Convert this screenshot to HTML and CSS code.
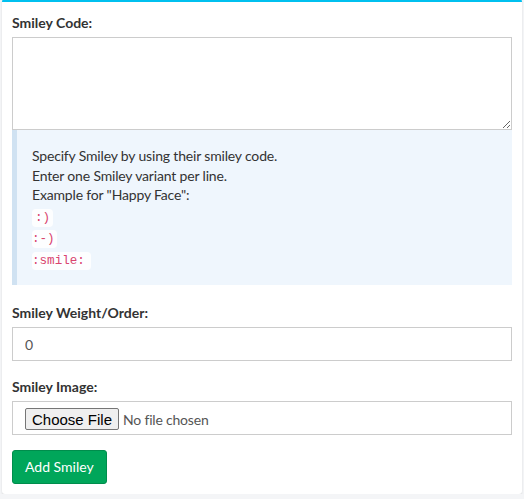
FILE: index.html
```html
<!DOCTYPE html>
<html>
<head>
<meta charset="utf-8">
<link rel="stylesheet" href="styles.css">
</head>
<body>
<div class="box">
  <div class="box-body">
    <div class="form-group">
      <label class="label">Smiley Code:</label>
      <textarea class="form-control textarea"></textarea>
      <div class="callout">
        <div class="line">Specify Smiley by using their smiley code.</div>
        <div class="line">Enter one Smiley variant per line.</div>
        <div class="line">Example for "Happy Face":</div>
        <div class="code-line"><code class="c1">:)</code></div>
        <div class="code-line"><code class="c2">:-)</code></div>
        <div class="code-line"><code class="c3">:smile:</code></div>
      </div>
    </div>
    <div class="form-group">
      <label class="label">Smiley Weight/Order:</label>
      <input class="form-control input" type="text" value="0">
    </div>
    <div class="form-group form-group-last">
      <label class="label">Smiley Image:</label>
      <div class="form-control file-wrap">
        <input class="file" type="file">
      </div>
    </div>
    <button class="btn">Add Smiley</button>
  </div>
</div>
</body>
</html>
```
FILE: styles.css
```css
html, body {
  margin: 0;
  padding: 0;
}
body {
  background: #f4f5f7;
  font-family: Lato, "Liberation Sans", sans-serif;
  font-size: 14px;
  line-height: 20px;
  color: #333;
  padding: 0 2px;
}
.box {
  margin-top: -1px;
  background: #fff;
  border-top: 3px solid #00c0ef;
  border-radius: 3px;
  box-shadow: 0 1px 2px rgba(0,0,0,0.12);
}
.box-body {
  padding: 11px 10px 10px;
}
.label {
  display: block;
  font-weight: 700;
  margin-bottom: 4px;
  color: #333;
}
.form-group {
  margin-bottom: 16px;
}
.form-group-last {
  margin-bottom: 15px;
}
.form-control {
  display: block;
  box-sizing: border-box;
  width: 100%;
  border: 1px solid #ccc;
  background: #fff;
  font-family: inherit;
  font-size: 14px;
  color: #555;
  padding: 6px 12px;
  margin: 0;
}
.textarea {
  height: 93px;
  resize: vertical;
}
.callout {
  background: #eff6fd;
  border-left: 5px solid #d0e2f2;
  padding: 16px 15px 16px 15px;
  margin-bottom: 18px;
  letter-spacing: -0.17px;
}
.line {
  line-height: 19.5px;
}
.code-line {
  height: 21.5px;
  line-height: 21px;
}
code {
  font-family: "Liberation Mono", monospace;
  font-size: 12.6px;
  letter-spacing: 0;
  color: #d9446f;
  background: #fdfeff;
  border-radius: 4px;
  padding: 2px 3px;
}
.c2 {
  padding: 2px 2px 2px 0;
}
.c3 {
  padding: 2px 6px 2px 0;
}
.input {
  height: 34px;
  outline: none;
}
.file-wrap {
  height: 34px;
  padding: 6px 12px;
}
.file {
  font-family: inherit;
  font-size: 14px;
  letter-spacing: -0.2px;
  color: #555;
  line-height: 20px;
}
.file::file-selector-button {
  font-family: "Liberation Sans", Arial, sans-serif;
  font-size: 15px;
  letter-spacing: 0;
  height: 22px;
  padding: 0 6px;
  margin-right: 4px;
  border: 1px solid #767676;
  border-radius: 2px;
  background: #efefef;
  color: #000;
}
.btn {
  display: block;
  height: 34px;
  padding: 6px 12px;
  background: #00a65a;
  border: 1px solid #008d4c;
  border-radius: 3px;
  color: #fff;
  font-family: inherit;
  font-size: 14px;
  line-height: 20px;
}
```
